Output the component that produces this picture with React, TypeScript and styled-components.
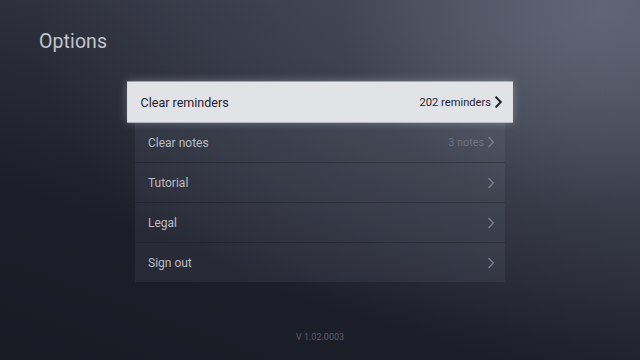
import React, { FC } from "react";
import styled, { createGlobalStyle } from "styled-components";

interface OptionItem {
  id: string;
  label: string;
  detail?: string;
}

const options: OptionItem[] = [
  { id: "reminders", label: "Clear reminders", detail: "202 reminders" },
  { id: "notes", label: "Clear notes", detail: "3 notes" },
  { id: "tutorial", label: "Tutorial" },
  { id: "legal", label: "Legal" },
  { id: "signout", label: "Sign out" },
];

const GlobalStyle = createGlobalStyle`
  html, body {
    margin: 0;
    padding: 0;
    width: 640px;
    height: 360px;
    overflow: hidden;
    background: #1a1c26;
  }
  * {
    box-sizing: border-box;
  }
`;

const Chevron: FC<{ focused: boolean }> = ({ focused }) => (
  <ChevronSvg viewBox="0 0 8 12" focused={focused}>
    <path d="M2 1.5 L6.3 6 L2 10.5" />
  </ChevronSvg>
);

const App: FC = () => {
  const focusedId = "reminders";

  return (
    <>
      <GlobalStyle />
      <Screen>
        <Title>Options</Title>
        <Body>
          <List>
            {options.map((item) => {
              const focused = item.id === focusedId;
              return (
                <Row key={item.id} focused={focused}>
                  <Label focused={focused}>{item.label}</Label>
                  <Right>
                    {item.detail && (
                      <Detail focused={focused}>{item.detail}</Detail>
                    )}
                    <Chevron focused={focused} />
                  </Right>
                </Row>
              );
            })}
          </List>
        </Body>
        <Version>V 1.02.0003</Version>
      </Screen>
    </>
  );
};

const Screen = styled.div`
  position: relative;
  width: 640px;
  height: 360px;
  display: flex;
  flex-direction: column;
  font-family: Roboto, "Noto Sans", sans-serif;
  background:
    radial-gradient(ellipse 260px 200px at 600px 10px, rgba(120, 126, 142, 0.45), rgba(120, 126, 142, 0) 100%),
    radial-gradient(ellipse 520px 300px at 560px 40px, rgba(90, 96, 112, 0.5), rgba(90, 96, 112, 0) 100%),
    linear-gradient(200deg, #424655 0%, #2d303c 40%, #1c1e29 70%, #181a24 100%);
`;

const Title = styled.h1`
  margin: 0;
  padding: 30px 0 0 39px;
  height: 82px;
  font-size: 19.5px;
  font-weight: 400;
  line-height: 24px;
  color: #c2c5cd;
  letter-spacing: 0.1px;
`;

const Body = styled.div`
  display: flex;
  justify-content: center;
`;

const List = styled.div`
  width: 370px;
  display: flex;
  flex-direction: column;
  background: rgba(150, 156, 175, 0.1);
`;

const Row = styled.div<{ focused: boolean }>`
  height: 40px;
  display: flex;
  align-items: center;
  justify-content: space-between;
  padding: 0 10px 0 13px;
  border-top: ${({ focused }) =>
    focused ? "none" : "1px solid rgba(20, 22, 30, 0.35)"};
  background: ${({ focused }) => (focused ? "#e2e3e7" : "transparent")};
  transform: ${({ focused }) => (focused ? "scale(1.043, 1.03)" : "none")};
  transform-origin: 50% 45%;
  box-shadow: ${({ focused }) =>
    focused ? "0 0 8px rgba(210, 215, 230, 0.35)" : "none"};
  position: relative;
  z-index: ${({ focused }) => (focused ? 1 : 0)};

  &:nth-child(2) {
    border-top: none;
  }
`;

const Label = styled.span<{ focused: boolean }>`
  font-size: 12px;
  color: ${({ focused }) => (focused ? "#1f2129" : "#babdc5")};
  padding-top: 1px;
`;

const Right = styled.span`
  display: flex;
  align-items: center;
  gap: 3px;
`;

const Detail = styled.span<{ focused: boolean }>`
  font-size: ${({ focused }) => (focused ? "10.7px" : "10.8px")};
  color: ${({ focused }) => (focused ? "#23252d" : "#6f7381")};
`;

const ChevronSvg = styled.svg<{ focused: boolean }>`
  width: 8px;
  height: 12px;
  fill: none;
  stroke: ${({ focused }) => (focused ? "#1c1e25" : "#7d818e")};
  stroke-width: ${({ focused }) => (focused ? 1.9 : 1.3)};
  stroke-linecap: square;
`;

const Version = styled.div`
  margin-top: auto;
  padding-bottom: 18px;
  text-align: center;
  font-size: 9px;
  color: #5a5e6c;
`;

export default App;
